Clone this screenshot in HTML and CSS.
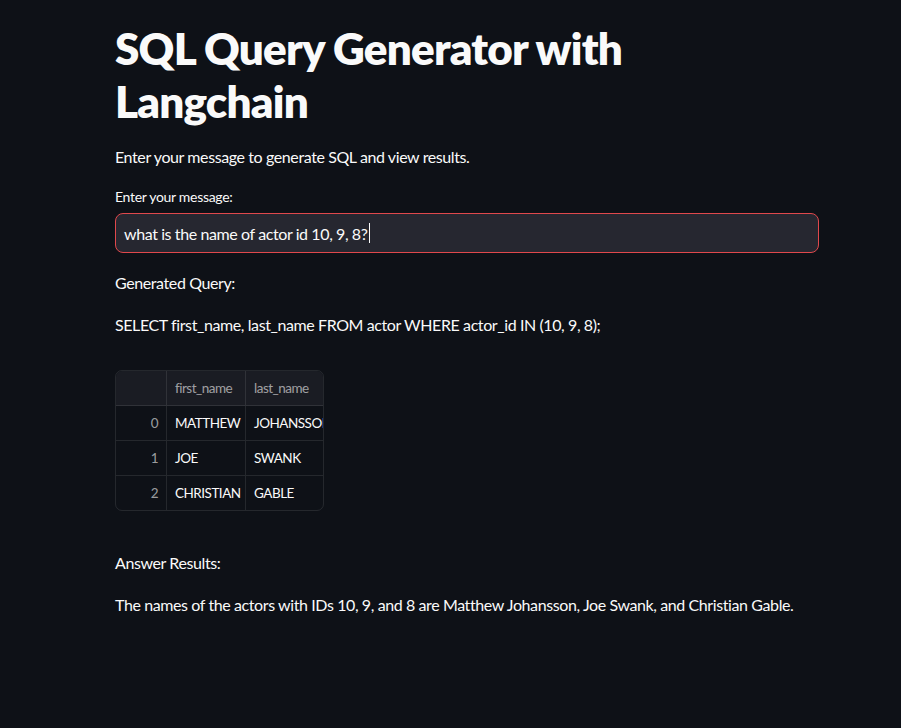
FILE: index.html
```html
<!DOCTYPE html>
<html>
<head>
<meta charset="utf-8">
<link rel="stylesheet" href="styles.css">
</head>
<body>
<main class="main">
  <h1 class="title">SQL Query Generator with Langchain</h1>
  <p class="text intro">Enter your message to generate SQL and view results.</p>
  <label class="label">Enter your message:</label>
  <div class="input"><span class="input-text">what is the name of actor id 10, 9, 8?</span><span class="caret"></span></div>
  <p class="text gen">Generated Query:</p>
  <p class="text sql">SELECT first_name, last_name FROM actor WHERE actor_id IN (10, 9, 8);</p>
  <div class="table">
    <div class="row head">
      <div class="cell idx"></div>
      <div class="cell c1">first_name</div>
      <div class="cell c2">last_name</div>
    </div>
    <div class="row">
      <div class="cell idx">0</div>
      <div class="cell c1">MATTHEW</div>
      <div class="cell c2">JOHANSSON</div>
    </div>
    <div class="row">
      <div class="cell idx">1</div>
      <div class="cell c1">JOE</div>
      <div class="cell c2">SWANK</div>
    </div>
    <div class="row last">
      <div class="cell idx">2</div>
      <div class="cell c1">CHRISTIAN</div>
      <div class="cell c2">GABLE</div>
    </div>
  </div>
  <p class="text ans">Answer Results:</p>
  <p class="text final">The names of the actors with IDs 10, 9, and 8 are Matthew Johansson, Joe Swank, and Christian Gable.</p>
</main>
</body>
</html>
```
FILE: styles.css
```css
html, body {
  margin: 0;
  padding: 0;
  background: #0e1117;
  color: #fafafa;
  font-family: "Lato", "Noto Sans", sans-serif;
}
.main {
  padding: 22px 0 0 115px;
  width: 704px;
  display: flex;
  flex-direction: column;
  align-items: flex-start;
}
.title {
  margin: 0;
  font-size: 44px;
  font-weight: 800;
  line-height: 53px;
  letter-spacing: -0.8px;
  width: 560px;
}
.text {
  margin: 0;
  font-size: 16px;
  line-height: 24px;
  letter-spacing: -0.4px;
  white-space: nowrap;
}
.intro { margin-top: 17px; }
.label {
  margin-top: 19px;
  font-size: 14px;
  line-height: 18px;
  letter-spacing: -0.3px;
}
.input {
  margin-top: 7px;
  width: 694px;
  height: 38px;
  border: 1px solid #e0484c;
  border-radius: 8px;
  background: #262730;
  display: flex;
  align-items: center;
  padding-left: 8px;
  font-size: 16px;
  letter-spacing: -0.4px;
}
.caret {
  width: 1px;
  height: 20px;
  margin-left: 1px;
  background: #fafafa;
}
.gen { margin-top: 18px; }
.sql { margin-top: 18px; }
.table {
  margin-top: 33px;
  border: 1px solid rgba(250,250,250,0.1);
  border-radius: 7px;
  overflow: hidden;
  width: 207px;
  font-size: 13.5px;
  letter-spacing: -0.5px;
}
.row {
  display: flex;
  height: 35px;
  border-bottom: 1px solid rgba(250,250,250,0.1);
  box-sizing: border-box;
}
.row.last { border-bottom: 0; height: 34px; }
.row.head { background: #1a1c23; color: rgba(250,250,250,0.6); }
.cell {
  display: flex;
  align-items: center;
  padding: 0 8px;
  white-space: nowrap;
  overflow: hidden;
  box-sizing: border-box;
}
.idx {
  width: 51px;
  justify-content: flex-end;
  color: rgba(250,250,250,0.6);
  border-right: 1px solid rgba(250,250,250,0.1);
}
.c1 { width: 79px; border-right: 1px solid rgba(250,250,250,0.1); }
.c2 { width: 77px; padding-right: 0; }
.ans { margin-top: 40px; }
.final { margin-top: 18px; }
```
